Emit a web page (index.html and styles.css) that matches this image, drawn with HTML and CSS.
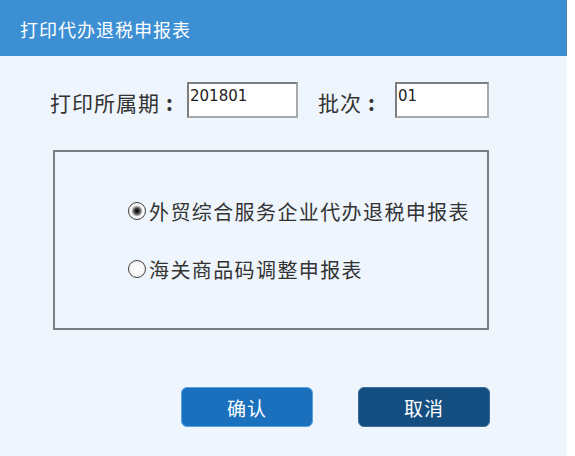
FILE: index.html
```html
<!DOCTYPE html>
<html lang="zh-CN">
<head>
<meta charset="utf-8">
<title>打印代办退税申报表</title>
<link rel="stylesheet" href="styles.css">
</head>
<body>
<div class="dialog">
  <div class="header">打印代办退税申报表</div>
  <div class="form-row">
    <label class="label label-period">打印所属期<span class="colon">:</span></label>
    <input class="field field-period" type="text" value="201801">
    <label class="label label-batch">批次<span class="colon">:</span></label>
    <input class="field field-batch" type="text" value="01">
  </div>
  <div class="group">
    <label class="option option-first"><input class="radio" type="radio" name="t" checked><span>外贸综合服务企业代办退税申报表</span></label>
    <label class="option option-second"><input class="radio" type="radio" name="t"><span>海关商品码调整申报表</span></label>
  </div>
  <div class="actions">
    <button class="btn btn-ok">确认</button>
    <button class="btn btn-cancel">取消</button>
  </div>
</div>
</body>
</html>
```
FILE: styles.css
```css
html, body {
  margin: 0;
  padding: 0;
  background: #ffffff;
}
body {
  font-family: "Noto Sans CJK SC", "Noto Sans", sans-serif;
  color: #333333;
}
.dialog {
  width: 567px;
  height: 456px;
  background: #eef5fd;
  display: flex;
  flex-direction: column;
}
.header {
  height: 56px;
  box-sizing: border-box;
  background: #3d8fd3;
  border-right: 1px solid #4b88c0;
  color: #ffffff;
  font-size: 18px;
  line-height: 58px;
  padding-left: 20px;
  letter-spacing: 1px;
}
.form-row {
  display: flex;
  align-items: center;
  margin-top: 26px;
  padding-left: 50px;
  height: 36px;
}
.label {
  font-size: 21px;
  letter-spacing: 1px;
  line-height: 36px;
  padding-top: 2px;
  box-sizing: border-box;
  height: 36px;
}
.colon {
  margin-left: 6px;
  font-weight: bold;
}
.label-period {
  width: 137px;
}
.label-batch {
  margin-left: 20px;
  width: 77px;
}
.field {
  box-sizing: border-box;
  height: 36px;
  border: 2px solid #7e7e7e;
  border-right-color: #a9a9a9;
  border-bottom-color: #a9a9a9;
  background: #ffffff;
  font-family: "DejaVu Sans", sans-serif;
  font-size: 15px;
  color: #222222;
  padding: 0 1px 8px;
  margin: 0;
  outline: none;
}
.field-period {
  width: 111px;
}
.field-batch {
  width: 94px;
}
.group {
  box-sizing: border-box;
  margin: 32px 0 0 53px;
  width: 436px;
  height: 180px;
  border: 2px solid #7a7e84;
  display: flex;
  flex-direction: column;
  padding-left: 73px;
}
.option {
  display: flex;
  align-items: center;
  font-size: 20px;
  letter-spacing: 1.4px;
  height: 24px;
}
.option-first {
  margin-top: 47px;
}
.option-second {
  margin-top: 34px;
}
.radio {
  appearance: none;
  -webkit-appearance: none;
  box-sizing: border-box;
  width: 18px;
  height: 18px;
  margin: 0 3px 0 0;
  border-radius: 50%;
  border: 1.5px solid #3f3f3f;
  background: radial-gradient(circle, #ffffff 0%, #f4f4f4 70%, #dcdcdc 100%);
}
.radio:checked {
  background: radial-gradient(circle, #000000 0%, #3a3a3a 22%, #9a9a9a 38%, #ffffff 52%, #f2f2f2 80%, #d8d8d8 100%);
}
.actions {
  display: flex;
  margin-top: 57px;
  padding-left: 181px;
  gap: 45px;
}
.btn {
  width: 132px;
  height: 40px;
  border-radius: 6px;
  color: #ffffff;
  font-family: "Noto Sans CJK SC", sans-serif;
  font-size: 19px;
  letter-spacing: 1px;
  padding: 0;
  cursor: pointer;
}
.btn-ok {
  background: #1b70bd;
  border: 1px solid #5aa3e2;
}
.btn-cancel {
  background: #144e81;
  border: 1px solid #3c6d9c;
}
```
